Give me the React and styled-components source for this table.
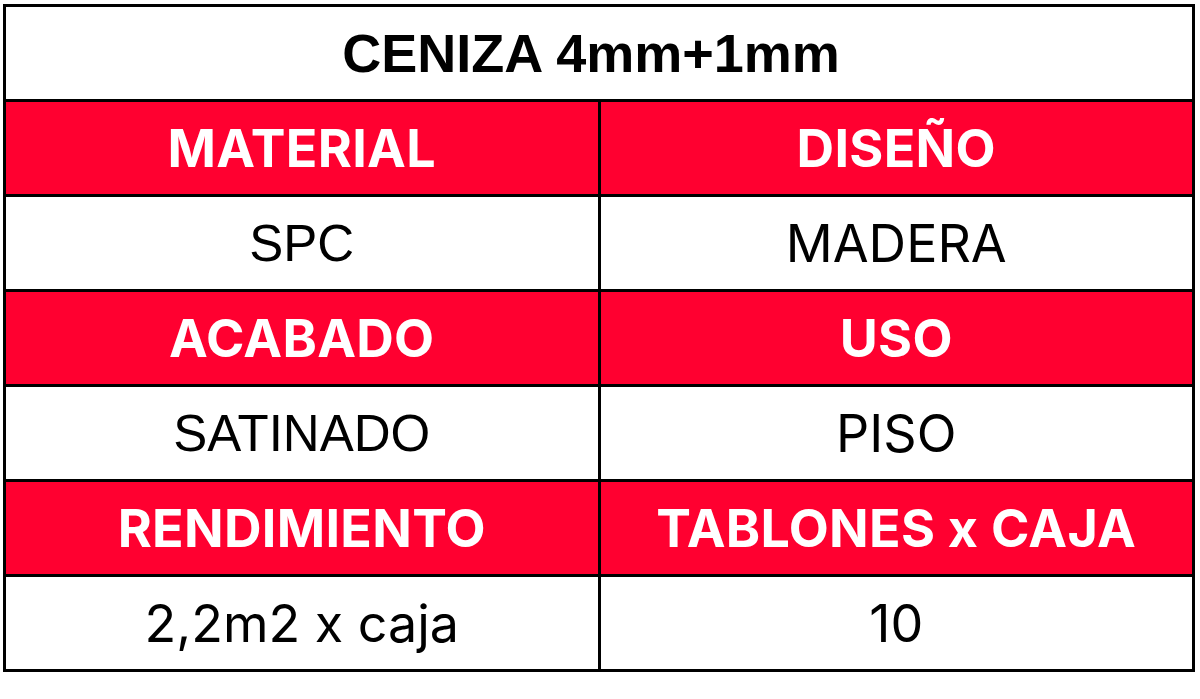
import React from "react";
import styled, { createGlobalStyle, css } from "styled-components";

const Global = createGlobalStyle`
  html, body { margin: 0; padding: 0; background: #ffffff; }
  body { font-family: "Liberation Sans", Arial, sans-serif; }
`;

const Page = styled.div`
  padding: 4px 0 0 3px;
`;

const Table = styled.div`
  width: 1192px;
  box-sizing: border-box;
  display: grid;
  grid-template-columns: 1fr 1fr;
  grid-auto-rows: 92px;
  gap: 3px;
  padding: 3px;
  background: #000000;
`;

const Cell = styled.div`
  display: flex;
  align-items: center;
  justify-content: center;
  white-space: nowrap;
  ${({ $kind }) =>
    $kind === "title"
      ? css`
          grid-column: 1 / -1;
          padding-right: 16px;
          background: #ffffff;
          color: #000000;
          font-family: "Liberation Sans", Arial, sans-serif;
          font-weight: 700;
          font-size: 54px;
        `
      : $kind === "head"
      ? css`
          background: #ff0030;
          color: #ffffff;
          font-family: Inter, "Liberation Sans", sans-serif;
          font-weight: 700;
          font-size: 52px;
          letter-spacing: 0.3px;
        `
      : css`
          background: #ffffff;
          color: #000000;
          font-weight: 400;
          font-size: ${({ $arial }) => ($arial ? "51px" : "52px")};
          font-family: ${({ $arial }) =>
            $arial
              ? `"Liberation Sans", Arial, sans-serif`
              : `Inter, "Liberation Sans", sans-serif`};
        `}
`;

const rows = [
  { head: ["MATERIAL", "DISEÑO"], body: [["SPC", true], ["MADERA", false]] },
  { head: ["ACABADO", "USO"], body: [["SATINADO", true], ["PISO", false]] },
  {
    head: ["RENDIMIENTO", "TABLONES x CAJA"],
    body: [["2,2m2 x caja", false], ["10", false]],
  },
];

export default function App() {
  return (
    <>
      <Global />
      <Page>
        <Table>
          <Cell $kind="title">CENIZA 4mm+1mm</Cell>
          {rows.map((r, i) => (
            <React.Fragment key={i}>
              {r.head.map((h) => (
                <Cell key={h} $kind="head">
                  {h}
                </Cell>
              ))}
              {r.body.map(([t, arial]) => (
                <Cell key={t} $kind="body" $arial={arial}>
                  {t}
                </Cell>
              ))}
            </React.Fragment>
          ))}
        </Table>
      </Page>
    </>
  );
}
